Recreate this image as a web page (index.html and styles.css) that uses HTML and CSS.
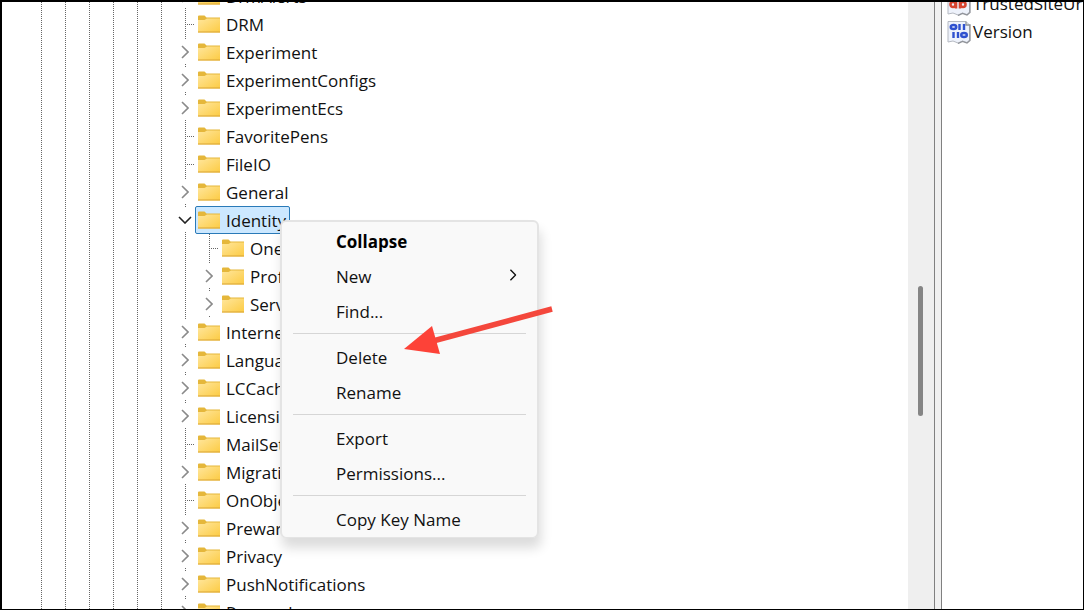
FILE: index.html
```html
<!DOCTYPE html>
<html lang="en">
<head>
	<meta charset="UTF-8">
	<meta name="viewport" content="width=device-width, initial-scale=1.0">
	<title>Registry Editor</title>
	<link rel="stylesheet" href="styles.css">
</head>

<body>

	<!-- shared icons -->
	<svg class="sprite" aria-hidden="true">
		<defs>
			<linearGradient id="folderFill" x1="0" y1="0" x2="1" y2="1">
				<stop offset="0" stop-color="#ffe69c"/>
				<stop offset="1" stop-color="#fccb43"/>
			</linearGradient>
		</defs>
		<symbol id="folder" viewBox="0 0 22 18">
			<path d="M0 1.5Q0 .5 1 .5H6.5L8.5 2.5H22V6H0Z" fill="#e5b73b"/>
			<path d="M0 5H6.5L9 3.5H22V17.5H0Z" fill="url(#folderFill)"/>
			<path d="M0 17H22" stroke="#d9a536"/>
		</symbol>
		<symbol id="chevron" viewBox="0 0 8 14">
			<path d="M1 1L7 7L1 13" fill="none" stroke="currentColor" stroke-width="1.6"/>
		</symbol>
		<symbol id="page" viewBox="0 0 24 24">
			<path d="M1 1.5H19L22.5 5V20L20 22.5L15.5 21L11 23L6 21L1 22Z" fill="#eef2fb" stroke="#b5b9c2"/>
			<path d="M19 1.5V5H23V20.5L20 23L15.5 21.5L11 23.5" fill="none" stroke="#8f9298" stroke-width="1.3"/>
		</symbol>
	</svg>

	<div class="window">
		<ul class="tree" id="tree"></ul>

		<div class="scrollbar">
			<div class="thumb"></div>
		</div>
		<div class="splitter"></div>

		<ul class="values">
			<li class="value">
				<svg class="value-icon" viewBox="0 0 24 24">
					<use href="#page"/>
					<g fill="none" stroke="#d8452f" stroke-width="2.6">
						<circle cx="6" cy="12.500" r="2.500"/><path d="M9 8.500V16.500"/>
						<path d="M13 5V16.500"/><circle cx="16" cy="12.500" r="2.500"/>
					</g>
				</svg>
				<span>TrustedSiteUrlForm</span>
			</li>
			<li class="value">
				<svg class="value-icon" viewBox="0 0 24 24">
					<use href="#page"/>
					<g fill="none" stroke="#2f51cf" stroke-width="2.4">
						<ellipse cx="6.500" cy="7" rx="2.800" ry="2"/><path d="M12.500 4V10M17 4V10"/>
						<path d="M6.500 12V18M11 12V18"/><ellipse cx="17" cy="15" rx="2.800" ry="2"/>
					</g>
				</svg>
				<span>Version</span>
			</li>
		</ul>

		<div class="menu" role="menu">
			<button class="menu-item default" role="menuitem">Collapse</button>
			<button class="menu-item" role="menuitem">New
				<svg class="submenu-arrow" viewBox="0 0 8 14"><use href="#chevron"/></svg>
			</button>
			<button class="menu-item" role="menuitem">Find...</button>
			<hr>
			<button class="menu-item" role="menuitem">Delete</button>
			<button class="menu-item" role="menuitem">Rename</button>
			<hr>
			<button class="menu-item" role="menuitem">Export</button>
			<button class="menu-item" role="menuitem">Permissions...</button>
			<hr>
			<button class="menu-item" role="menuitem">Copy Key Name</button>
		</div>

		<svg class="pointer" viewBox="0 0 150 50">
			<path d="M149 4L30 36" stroke="#f4473c" stroke-width="5.5"/>
			<path d="M1 44L29 21L37 49Z" fill="#fd4238"/>
		</svg>
	</div>

	<script>
		// state: "closed" and "open" keys have an expander, "leaf" keys do not
		const keys = [
			{ name: "DrmAlerts", state: "closed" },
			{ name: "DRM", state: "leaf" },
			{ name: "Experiment", state: "closed" },
			{ name: "ExperimentConfigs", state: "closed" },
			{ name: "ExperimentEcs", state: "closed" },
			{ name: "FavoritePens", state: "leaf" },
			{ name: "FileIO", state: "leaf" },
			{ name: "General", state: "closed" },
			{ name: "Identity", state: "open", selected: true },
			{ name: "OneAuth", state: "leaf", child: true },
			{ name: "Profiles", state: "closed", child: true },
			{ name: "ServiceAuth", state: "closed", child: true },
			{ name: "Internet", state: "closed" },
			{ name: "LanguageResources", state: "closed" },
			{ name: "LCCache", state: "closed" },
			{ name: "Licensing", state: "closed" },
			{ name: "MailSettings", state: "leaf" },
			{ name: "Migration", state: "closed" },
			{ name: "OnObject", state: "leaf" },
			{ name: "Prewarm", state: "closed" },
			{ name: "Privacy", state: "closed" },
			{ name: "PushNotifications", state: "closed" },
			{ name: "Research", state: "closed" }
		];

		const tree = document.getElementById("tree");

		keys.forEach((key) => {
			const li = document.createElement("li");
			li.className = "key";

			// one guide line for every level above this key
			const levels = key.child ? 7 : 6;
			let html = '<span class="guide"></span>'.repeat(levels);

			if (key.state === "leaf") {
				html += '<span class="branch"></span>';
			} else {
				html += `<button class="expander ${key.state}" aria-label="Toggle ${key.name}"><svg viewBox="0 0 8 14"><use href="#chevron"/></svg></button>`;
			}

			html += `<span class="label${key.selected ? " selected" : ""}"><svg class="folder" viewBox="0 0 22 18"><use href="#folder"/></svg><span class="name">${key.name}</span></span>`;
			li.innerHTML = html;
			tree.appendChild(li);
		});
	</script>
</body>

</html>
```
FILE: styles.css
```css
*{
	margin: 0;
	padding: 0;
	box-sizing: border-box;
}

body{
	font-family: 'Segoe UI', 'Open Sans', 'Noto Sans', sans-serif;
	font-size: 17px;
	line-height: 28px;
	color: #111;
	background-color: white;
}

ul {
	list-style: none;
}
button {
	font: inherit;
	color: inherit;
	background: none;
	border: none;
}

.sprite {
	position: absolute;
	width: 0;
	height: 0;
}

.window {
	position: relative;
	display: flex;
	height: 100vh;
	overflow: hidden;
	border: 2px solid black;
	border-width: 2px 1px 1px 2px;
}

/* key tree */
.tree {
	flex: 1;
	min-width: 0;
	margin-top: -20px;
	padding-left: 27px;
}
.key {
	display: flex;
	align-items: center;
	height: 28px;
	white-space: nowrap;
}
.guide, .branch {
	flex: none;
	width: 24px;
	height: 28px;
	background: repeating-linear-gradient(#666 0 1px, transparent 1px 2px) 12px 0 / 1px 100% no-repeat;
}
.branch {
	width: 22px;
	background:
		repeating-linear-gradient(#666 0 1px, transparent 1px 2px) 12px 0 / 1px 100% no-repeat,
		repeating-linear-gradient(90deg, #666 0 1px, transparent 1px 2px) 12px 14px / 10px 1px no-repeat;
}
.expander {
	flex: none;
	width: 22px;
	height: 28px;
	padding-left: 8px;
	text-align: left;
	color: #8a8a8a;
	background:
		linear-gradient(#666, #666) 12px 0 / 1px 1px no-repeat,
		linear-gradient(#666, #666) 12px 26px / 1px 1px no-repeat;
}
.expander svg {
	display: block;
	width: 8px;
	height: 14px;
}
.expander.open {
	color: #222;
}
.expander.open svg {
	transform: rotate(90deg);
}
.label {
	display: flex;
	align-items: center;
	gap: 6px;
	height: 28px;
	padding: 0 3px 0 2px;
	border: 1px solid transparent;
}
.label.selected {
	background-color: #cce8ff;
	border-color: #2a7ab8;
	border-radius: 2px;
}
.folder {
	width: 22px;
	height: 18px;
}
.name {
	padding-top: 2px;
}

/* scrollbar and splitter */
.scrollbar {
	width: 26px;
	padding: 284px 11px 0 10px;
	background-color: #efefef;
}
.thumb {
	height: 130px;
	border-radius: 3px;
	background-color: #858585;
}
.splitter {
	width: 8px;
	background-color: #f0f0f0;
	border: 1px solid #808080;
	border-width: 0 1px;
}

/* values pane */
.values {
	width: 141px;
	margin-top: -12px;
	padding-left: 5px;
	overflow: hidden;
}
.value {
	display: flex;
	align-items: center;
	gap: 2px;
	height: 28px;
	white-space: nowrap;
}
.value-icon {
	flex: none;
	width: 24px;
	height: 24px;
}

/* context menu */
.menu {
	position: absolute;
	left: 278px;
	top: 218px;
	width: 259px;
	padding: 2px 11px 0;
	background-color: #f9f9f9;
	border: 2px solid #e4e4e4;
	border-bottom-width: 1px;
	border-radius: 6px;
	box-shadow: 2px 10px 12px rgba(0, 0, 0, 0.14);
}
.menu-item {
	display: flex;
	align-items: center;
	justify-content: space-between;
	width: 100%;
	height: 35px;
	padding: 0 9px 0 43px;
	color: #111;
}
.menu-item.default {
	font-weight: bold;
	color: black;
}
.submenu-arrow {
	width: 8px;
	height: 12px;
	margin-bottom: 4px;
}
.menu hr {
	margin: 4px 0 6px;
	border: none;
	border-top: 1px solid #d6d6d6;
}

.pointer {
	position: absolute;
	left: 401px;
	top: 303px;
	width: 150px;
	height: 50px;
}
```
